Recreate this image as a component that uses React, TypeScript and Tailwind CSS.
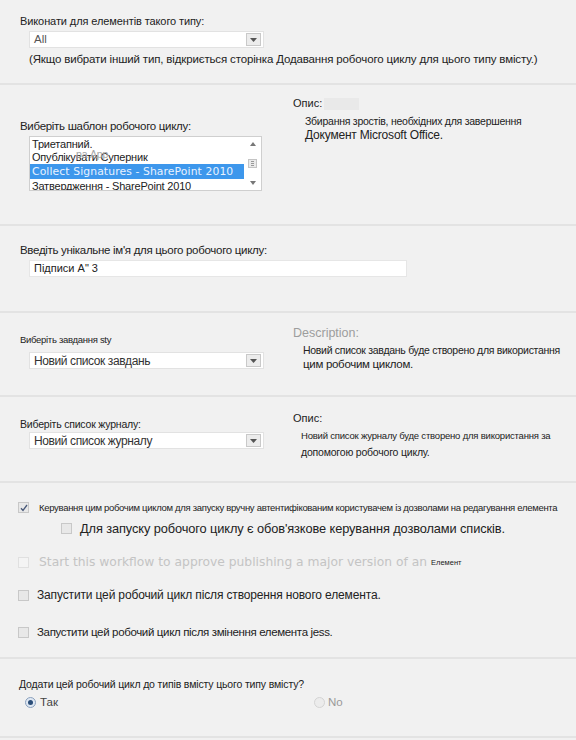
import React from 'react';

const font = { fontFamily: '"Liberation Sans", Arial, sans-serif' };

function Select({ value, text = 'text-[12px]' }: { value: string; text?: string }) {
  return (
    <div className="w-[235px] h-[17px] bg-white border border-[#e2e2e2] flex items-center justify-between pl-[4px] pr-[2px]">
      <span className={`${text} text-[#333] leading-none`}>{value}</span>
      <span className="w-[15px] h-[13px] bg-[#ececec] border border-[#c9c9c9] flex items-center justify-center">
        <svg width="7" height="4" viewBox="0 0 7 4">
          <path d="M0 0h7L3.5 4z" fill="#555" />
        </svg>
      </span>
    </div>
  );
}

function Checkbox({ checked = false, disabled = false }: { checked?: boolean; disabled?: boolean }) {
  return (
    <span
      className={`w-[11px] h-[11px] shrink-0 border flex items-center justify-center ${
        disabled ? 'border-[#e0e0e0] bg-[#f4f4f4]' : 'border-[#c8c8c8] bg-[#e8e8e8]'
      }`}
    >
      {checked && (
        <svg width="8" height="8" viewBox="0 0 8 8">
          <path d="M1 4.2l2 2.2L7 1" stroke="#4a5a7a" strokeWidth="1.3" fill="none" />
        </svg>
      )}
    </span>
  );
}

function Radio({ checked = false }: { checked?: boolean }) {
  return (
    <span
      className={`w-[11px] h-[11px] rounded-full border flex items-center justify-center ${
        checked ? 'border-[#8aa0bd] bg-[#dfe8f3]' : 'border-[#d4d4d4] bg-[#ececec]'
      }`}
    >
      {checked && <span className="w-[5px] h-[5px] rounded-full bg-[#2b4d78]" />}
    </span>
  );
}

export default function App() {
  return (
    <div className="w-[576px] h-[740px] bg-[#f1f1f1] text-[#222] overflow-hidden" style={font}>
      {/* Content type */}
      <div className="h-[85px] border-b-2 border-[#e3e3e3] pl-[20px] pt-[15px]">
        <p className="text-[11px] leading-[13px] tracking-[-0.1px]">Виконати для елементів такого типу:</p>
        <div className="ml-[9px] mt-[3px]">
          <Select value="All" text="text-[11.5px] text-[#555]" />
        </div>
        <p className="ml-[9px] mt-[5px] text-[11.5px] leading-[13px] tracking-[-0.15px] whitespace-nowrap">
          (Якщо вибрати інший тип, відкриється сторінка Додавання робочого циклу для цього типу вмісту.)
        </p>
      </div>

      {/* Template */}
      <div className="h-[141px] border-b-2 border-[#e3e3e3] flex">
        <div className="w-[293px] pl-[20px] pt-[34px]">
          <p className="text-[11.5px] leading-[14px] tracking-[-0.3px]">Виберіть шаблон робочого циклу:</p>
          <div className="ml-[9px] mt-[3px] w-[233px] h-[55px] bg-white border border-[#cfcfcf] flex overflow-hidden">
            <div className="flex-1 flex flex-col text-[11px] leading-[13px] pt-[1px] tracking-[-0.2px]">
              <span className="pl-[2px] h-[13px]">Триетапний.</span>
              <span className="pl-[2px] h-[13px] relative">
                Опублікувати Суперник
                <span className="absolute left-[46px] top-[-2px] text-[#a5a5a5] text-[10.5px] leading-[11px]">ра App</span>
              </span>
              <span
                className="pl-[2px] h-[15px] bg-[#3d97ec] text-[#e8f2ff] leading-[15px] tracking-[0.1px] whitespace-nowrap"
                style={{ fontFamily: '"DejaVu Sans", Verdana, sans-serif', fontSize: '10.8px' }}
              >
                Collect Signatures - SharePoint 2010
              </span>
              <span className="pl-[2px] h-[13px] pt-[1px] whitespace-nowrap">Затвердження - SharePoint 2010</span>
            </div>
            <div className="w-[17px] flex flex-col items-center justify-between py-[5px] bg-white">
              <svg width="6" height="4" viewBox="0 0 6 4"><path d="M3 0L6 4H0z" fill="#777" /></svg>
              <span className="w-[9px] h-[9px] bg-[#eaeaea] border border-[#c4c4c4] flex flex-col justify-center gap-[1px] px-[2px]">
                <span className="h-px bg-[#999]" />
                <span className="h-px bg-[#999]" />
                <span className="h-px bg-[#999]" />
              </span>
              <svg width="6" height="4" viewBox="0 0 6 4"><path d="M0 0h6L3 4z" fill="#777" /></svg>
            </div>
          </div>
        </div>
        <div className="pt-[12px]">
          <div className="flex items-center">
            <span className="text-[11px] leading-[13px]">Опис:</span>
            <span className="ml-[2px] w-[35px] h-[12px] bg-[#e9e9e9]" />
          </div>
          <div className="ml-[12px] mt-[5px]">
            <p className="text-[10.5px] leading-[13px] tracking-[-0.25px]">Збирання зростів, необхідних для завершення</p>
            <p className="text-[12px] leading-[15px] tracking-[-0.2px]">Документ Microsoft Office.</p>
          </div>
        </div>
      </div>

      {/* Name */}
      <div className="h-[87px] border-b-2 border-[#e3e3e3] pl-[20px] pt-[17px]">
        <p className="text-[11.5px] leading-[14px] tracking-[-0.3px]">Введіть унікальне ім'я для цього робочого циклу:</p>
        <div className="ml-[9px] mt-[3px] w-[378px] h-[17px] bg-white border border-[#e6e6e6] flex items-center pl-[4px]">
          <span className="text-[11px] leading-none">Підписи А" 3</span>
        </div>
      </div>

      {/* Task list */}
      <div className="h-[84px] border-b-2 border-[#e3e3e3] flex">
        <div className="w-[293px] pl-[20px] pt-[21px]">
          <p className="text-[9.5px] leading-[12px] tracking-[-0.3px]">Виберіть завдання sty</p>
          <div className="ml-[9px] mt-[6px]">
            <Select value="Новий список завдань" text="text-[12px] tracking-[-0.4px]" />
          </div>
        </div>
        <div className="pt-[13px]">
          <p className="text-[12.5px] leading-[15px] text-[#9d9d9d]">Description:</p>
          <div className="ml-[10px] mt-[3px] tracking-[-0.3px]">
            <p className="text-[10.5px] leading-[13px]">Новий список завдань буде створено для використання</p>
            <p className="mt-[1px] text-[11.5px] leading-[13px]">цим робочим циклом.</p>
          </div>
        </div>
      </div>

      {/* History list */}
      <div className="h-[86px] border-b-2 border-[#e3e3e3] flex">
        <div className="w-[293px] pl-[20px] pt-[21px]">
          <p className="text-[10.5px] leading-[13px] tracking-[-0.2px]">Виберіть список журналу:</p>
          <div className="ml-[9px] mt-[1px]">
            <Select value="Новий список журналу" text="text-[12px] tracking-[-0.4px]" />
          </div>
        </div>
        <div className="pt-[15px]">
          <p className="text-[11px] leading-[13px]">Опис:</p>
          <div className="ml-[8px] mt-[3px] leading-[16px] tracking-[-0.2px]">
            <p className="text-[9.5px]">Новий список журналу буде створено для використання за</p>
            <p className="text-[10.5px]">допомогою робочого циклу.</p>
          </div>
        </div>
      </div>

      {/* Start options */}
      <div className="h-[176px] border-b-2 border-[#e3e3e3] pl-[18px] pt-[19px]">
        <div className="flex items-center gap-[10px]">
          <Checkbox checked />
          <span className="text-[9.5px] leading-[11px] tracking-[-0.3px] whitespace-nowrap">
            Керування цим робочим циклом для запуску вручну автентифікованим користувачем із дозволами на редагування елемента
          </span>
        </div>
        <div className="flex items-center gap-[8px] ml-[43px] mt-[8px]">
          <Checkbox />
          <span className="text-[12.8px] leading-[15px] tracking-[-0.1px] whitespace-nowrap">
            Для запуску робочого циклу є обов'язкове керування дозволами списків.
          </span>
        </div>
        <div className="flex items-center gap-[10px] mt-[19px]">
          <Checkbox disabled />
          <span
            className="text-[12.3px] leading-[15px] text-[#c4c4c4] whitespace-nowrap"
            style={{ fontFamily: '"DejaVu Sans", Verdana, sans-serif' }}
          >
            Start this workflow to approve publishing a major version of an
          </span>
          <span className="text-[7.5px] leading-[9px] -ml-[6px]">Елемент</span>
        </div>
        <div className="flex items-center gap-[8px] mt-[18px]">
          <Checkbox />
          <span className="text-[12px] leading-[14px] tracking-[-0.15px] whitespace-nowrap">
            Запустити цей робочий цикл після створення нового елемента.
          </span>
        </div>
        <div className="flex items-center gap-[8px] mt-[23px]">
          <Checkbox />
          <span className="text-[11.5px] leading-[14px] tracking-[-0.35px] whitespace-nowrap">
            Запустити цей робочий цикл після змінення елемента jess.
          </span>
        </div>
      </div>

      {/* Content types */}
      <div className="h-[79px] border-b-2 border-[#e3e3e3] pl-[19px] pt-[18px]">
        <p className="text-[10.5px] leading-[14px] tracking-[-0.15px]">Додати цей робочий цикл до типів вмісту цього типу вмісту?</p>
        <div className="flex items-center mt-[4px] ml-[6px]">
          <div className="w-[289px] flex items-center gap-[4px]">
            <Radio checked />
            <span className="text-[11.5px] leading-[14px] text-[#444]">Так</span>
          </div>
          <div className="flex items-center gap-[3px]">
            <Radio />
            <span className="text-[11.5px] leading-[14px] text-[#999]">No</span>
          </div>
        </div>
      </div>
    </div>
  );
}
